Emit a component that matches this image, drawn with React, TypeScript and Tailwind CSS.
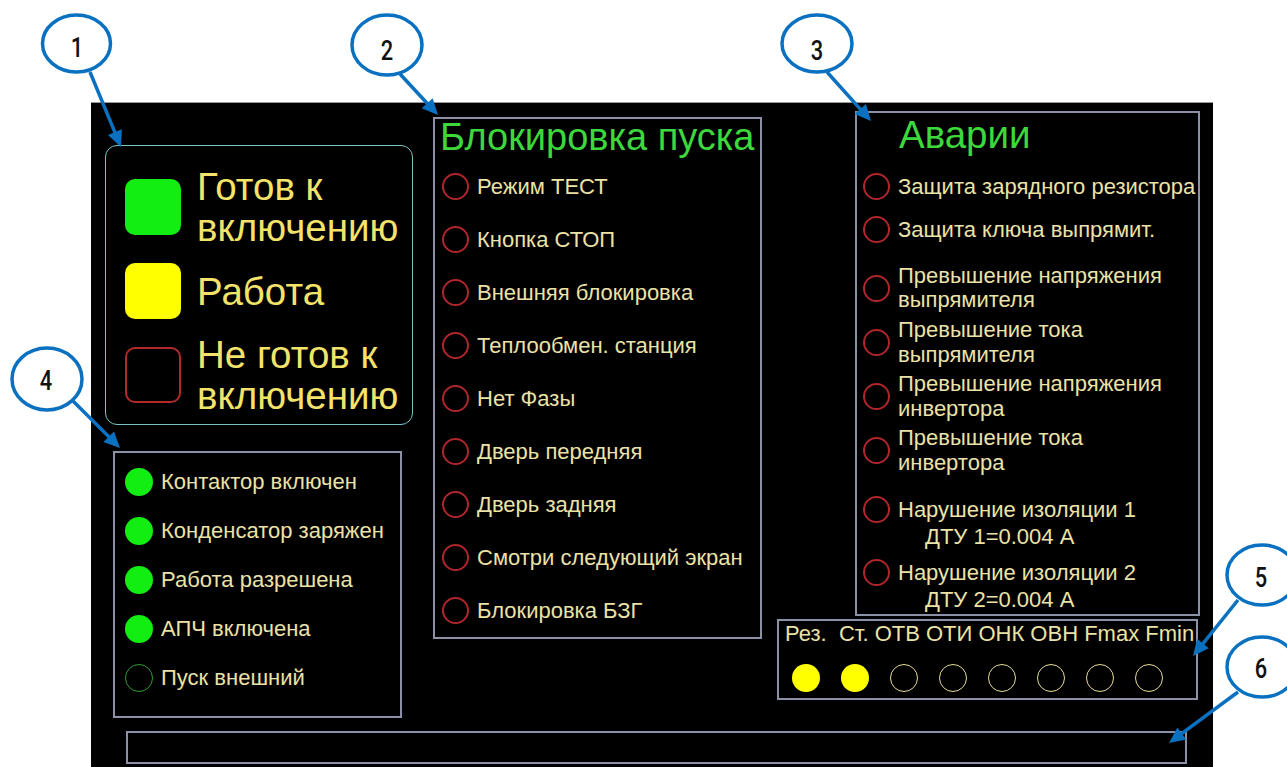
import React from "react";

type Callout = {
  n: string;
  cx: number;
  cy: number;
  rx: number;
  ry: number;
  tx: number;
  base: number;
  from: [number, number];
  to: [number, number];
};

const callouts: Callout[] = [
  { n: "1", cx: 76.5, cy: 43.5, rx: 34, ry: 28.5, tx: 77, base: 57, from: [90, 72], to: [121, 147] },
  { n: "2", cx: 387, cy: 45, rx: 35, ry: 30, tx: 387, base: 60, from: [400, 74], to: [438, 115] },
  { n: "3", cx: 817, cy: 43.5, rx: 35, ry: 28.5, tx: 817, base: 60, from: [827, 72], to: [871, 121] },
  { n: "4", cx: 47, cy: 379, rx: 35, ry: 31, tx: 46, base: 390, from: [72, 400], to: [120, 448] },
  { n: "5", cx: 1262, cy: 575, rx: 35, ry: 30, tx: 1261, base: 587, from: [1238, 600], to: [1193, 656] },
  { n: "6", cx: 1262, cy: 667, rx: 35, ry: 30, tx: 1261, base: 678, from: [1238, 692], to: [1169, 743] },
];

function arrowHead(from: [number, number], to: [number, number]) {
  const dx = to[0] - from[0];
  const dy = to[1] - from[1];
  const len = Math.hypot(dx, dy);
  const ux = dx / len;
  const uy = dy / len;
  const hl = 16;
  const hw = 7.5;
  const bx = to[0] - ux * hl;
  const by = to[1] - uy * hl;
  const p1 = [bx - uy * hw, by + ux * hw];
  const p2 = [bx + uy * hw, by - ux * hw];
  return {
    points: `${to[0]},${to[1]} ${p1[0]},${p1[1]} ${p2[0]},${p2[1]}`,
    lineEnd: [to[0] - ux * (hl - 2), to[1] - uy * (hl - 2)],
  };
}

function Callouts() {
  return (
    <svg
      className="absolute left-0 top-0 pointer-events-none"
      width={1287}
      height={767}
      viewBox="0 0 1287 767"
    >
      {callouts.map((c) => {
        const a = arrowHead(c.from, c.to);
        return (
          <g key={c.n}>
            <line
              x1={c.from[0]}
              y1={c.from[1]}
              x2={a.lineEnd[0]}
              y2={a.lineEnd[1]}
              stroke="#0a70c0"
              strokeWidth={3.5}
            />
            <polygon points={a.points} fill="#0a70c0" />
            <ellipse cx={c.cx} cy={c.cy} rx={c.rx} ry={c.ry} fill="#ffffff" stroke="#0a70c0" strokeWidth={3.5} />
            <g transform={`translate(${c.tx} ${c.base}) scale(0.78 1)`}>
              <text
                x={0}
                y={0}
                textAnchor="middle"
                fontSize={28}
                fontWeight={500}
                fill="#111111"
                fontFamily="Roboto, 'DejaVu Sans', sans-serif"
              >
                {c.n}
              </text>
            </g>
          </g>
        );
      })}
    </svg>
  );
}

function RedRing() {
  return <span className="block w-[27px] h-[27px] shrink-0 rounded-full border-2 border-[#b0262c]" />;
}

function StateRow({ box, lines }: { box: "green" | "yellow" | "red"; lines: string[] }) {
  const boxClass =
    box === "green"
      ? "bg-[#12ee12]"
      : box === "yellow"
      ? "bg-[#ffff00]"
      : "border-2 border-[#b02a2a]";
  return (
    <div className="h-[84px] flex items-center gap-[16px]">
      <span className={`block w-[56px] h-[56px] shrink-0 rounded-[10px] ${boxClass}`} />
      <div className="text-[38.5px] leading-[41px] text-[#f3e36a] whitespace-nowrap">
        {lines.map((l) => (
          <div key={l}>{l}</div>
        ))}
      </div>
    </div>
  );
}

const startBlocks = [
  "Режим ТЕСТ",
  "Кнопка СТОП",
  "Внешняя блокировка",
  "Теплообмен. станция",
  "Нет Фазы",
  "Дверь передняя",
  "Дверь задняя",
  "Смотри следующий экран",
  "Блокировка БЗГ",
];

const statusRows: { label: string; on: boolean }[] = [
  { label: "Контактор включен", on: true },
  { label: "Конденсатор заряжен", on: true },
  { label: "Работа разрешена", on: true },
  { label: "АПЧ включена", on: true },
  { label: "Пуск внешний", on: false },
];

const lamps = [true, true, false, false, false, false, false, false];

export default function App() {
  return (
    <div className="relative w-[1287px] h-[767px] overflow-hidden bg-white pt-[102px] font-['Liberation_Sans',Arial,sans-serif]">
      <div className="ml-[91px] w-[1122px] h-[665px] bg-black border-t border-[#9a9a9a] flex flex-col">
        <div className="flex items-start h-[615px]">
          {/* left column: state legend + contactor status */}
          <div className="flex flex-col pl-[14px] pt-[42px]">
            <div className="w-[308px] h-[280px] rounded-[12px] border-[1.5px] border-[#7cc4c4] pl-[19px] pt-[19px]">
              <StateRow box="green" lines={["Готов к", "включению"]} />
              <StateRow box="yellow" lines={["Работа"]} />
              <StateRow box="red" lines={["Не готов к", "включению"]} />
            </div>
            <div className="mt-[26px] ml-[8px] w-[289px] h-[267px] border-2 border-[#8d91a8] pl-[10px] pt-[4px]">
              {statusRows.map((r) => (
                <div key={r.label} className="h-[49px] flex items-center gap-[8px]">
                  <span
                    className={
                      r.on
                        ? "block w-[28px] h-[28px] shrink-0 rounded-full bg-[#12ee12]"
                        : "block w-[28px] h-[28px] shrink-0 rounded-full border-[1.5px] border-[#2f9a35]"
                    }
                  />
                  <span className="text-[22px] text-[#ebe2a8] whitespace-nowrap">{r.label}</span>
                </div>
              ))}
            </div>
          </div>

          {/* start interlocks */}
          <div className="ml-[20px] mt-[14px] w-[329px] h-[522px] border-2 border-[#8d91a8]">
            <div className="h-[41px] pl-[5px] text-[38px] leading-[36px] text-[#3cd83c] whitespace-nowrap">
              Блокировка пуска
            </div>
            <div className="pl-[7px]">
              {startBlocks.map((t) => (
                <div key={t} className="h-[53px] flex items-center gap-[8px]">
                  <RedRing />
                  <span className="text-[22px] text-[#ebe2a8] whitespace-nowrap">{t}</span>
                </div>
              ))}
            </div>
          </div>

          {/* alarms + lamp strip */}
          <div className="ml-[15px] flex flex-col">
            <div className="ml-[78px] mt-[8px] w-[345px] h-[505px] border-2 border-[#8d91a8] text-[22px] text-[#ebe2a8]">
              <div className="h-[52px] pt-[4px] pl-[42px] text-[38.5px] leading-[36px] text-[#3cd83c]">Аварии</div>
              <div className="pl-[6px] flex flex-col">
                <div className="h-[43px] flex items-center gap-[8px]">
                  <RedRing />
                  <span className="whitespace-nowrap">Защита зарядного резистора</span>
                </div>
                <div className="h-[43px] flex items-center gap-[8px]">
                  <RedRing />
                  <span className="whitespace-nowrap">Защита ключа выпрямит.</span>
                </div>
                <div className="mt-[12px] h-[50px] flex items-center gap-[8px] leading-[24px]">
                  <RedRing />
                  <div className="whitespace-nowrap">
                    <div>Превышение напряжения</div>
                    <div>выпрямителя</div>
                  </div>
                </div>
                <div className="mt-[4px] h-[50px] flex items-center gap-[8px] leading-[25px]">
                  <RedRing />
                  <div className="whitespace-nowrap">
                    <div>Превышение тока</div>
                    <div>выпрямителя</div>
                  </div>
                </div>
                <div className="mt-[4px] h-[50px] flex items-center gap-[8px] leading-[25px]">
                  <RedRing />
                  <div className="whitespace-nowrap">
                    <div>Превышение напряжения</div>
                    <div>инвертора</div>
                  </div>
                </div>
                <div className="mt-[4px] h-[50px] flex items-center gap-[8px] leading-[25px]">
                  <RedRing />
                  <div className="whitespace-nowrap">
                    <div>Превышение тока</div>
                    <div>инвертора</div>
                  </div>
                </div>
                <div className="mt-[21px] flex items-start gap-[8px] leading-[27px]">
                  <RedRing />
                  <div className="whitespace-nowrap">
                    <div>Нарушение изоляции 1</div>
                    <div className="pl-[27px]">ДТУ 1=0.004 А</div>
                  </div>
                </div>
                <div className="mt-[9px] flex items-start gap-[8px] leading-[27px]">
                  <RedRing />
                  <div className="whitespace-nowrap">
                    <div>Нарушение изоляции 2</div>
                    <div className="pl-[27px]">ДТУ 2=0.004 А</div>
                  </div>
                </div>
              </div>
            </div>

            <div className="mt-[3px] w-[421px] h-[81px] border-2 border-[#8d91a8]">
              <div className="pl-[6px] h-[26px] leading-[26px] text-[22px] text-[#ebe2a8] whitespace-pre">
                {"Рез.  Ст. ОТВ ОТИ ОНК ОВН Fmax Fmin"}
              </div>
              <div className="mt-[17px] pl-[13px] flex gap-[21px]">
                {lamps.map((on, i) => (
                  <span
                    key={i}
                    className={
                      on
                        ? "block w-[28px] h-[28px] rounded-full bg-[#ffff00]"
                        : "block w-[28px] h-[28px] rounded-full border-[1.5px] border-[#e6dc9a]"
                    }
                  />
                ))}
              </div>
            </div>
          </div>
        </div>

        {/* message line */}
        <div className="mt-[13px] ml-[35px] w-[1061px] h-[33px] border-2 border-[#8d91a8]" />
      </div>
      <Callouts />
    </div>
  );
}
